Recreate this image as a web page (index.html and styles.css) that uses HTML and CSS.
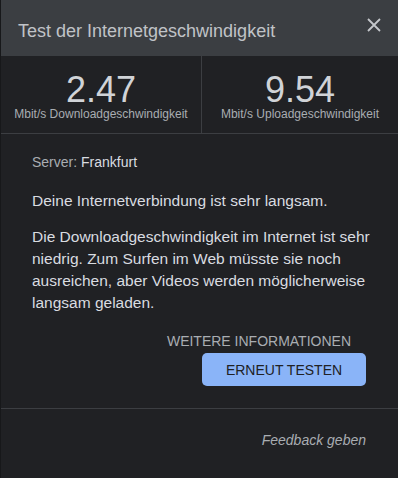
FILE: index.html
```html
<!DOCTYPE html>
<html lang="de">
<head>
<meta charset="utf-8">
<link rel="stylesheet" href="styles.css">
</head>
<body>
<div class="dialog">
  <header class="head">
    <h1 class="title">Test der Internetgeschwindigkeit</h1>
    <svg class="close" width="14" height="14" viewBox="0 0 14 14"><path d="M1 1L13 13M13 1L1 13" stroke="#c4c7cb" stroke-width="1.8" fill="none"/></svg>
  </header>
  <section class="stats">
    <div class="stat">
      <div class="num">2.47</div>
      <div class="label">Mbit/s Downloadgeschwindigkeit</div>
    </div>
    <div class="stat">
      <div class="num">9.54</div>
      <div class="label">Mbit/s Uploadgeschwindigkeit</div>
    </div>
  </section>
  <section class="info">
    <p class="server"><span class="muted">Server:</span> Frankfurt</p>
    <p class="slow">Deine Internetverbindung ist sehr langsam.</p>
    <p class="long">Die Downloadgeschwindigkeit im Internet ist sehr niedrig. Zum Surfen im Web müsste sie noch ausreichen, aber Videos werden möglicherweise langsam geladen.</p>
  </section>
  <div class="actions">
    <span class="more">WEITERE INFORMATIONEN</span>
    <button class="retest">ERNEUT TESTEN</button>
  </div>
  <footer class="foot">
    <span class="feedback">Feedback geben</span>
  </footer>
</div>
</body>
</html>
```
FILE: styles.css
```css
html, body {
  margin: 0;
  padding: 0;
  background: #202124;
}
body {
  font-family: "Liberation Sans", Arial, sans-serif;
  width: 398px;
  height: 478px;
  overflow: hidden;
}
.dialog {
  border-left: 1px solid #17181a;
  height: 478px;
  box-sizing: border-box;
  background: #202124;
}
.head {
  height: 56px;
  background: #3b3e42;
  display: flex;
  align-items: center;
  justify-content: space-between;
  padding: 0 17px 0 17px;
  box-sizing: border-box;
}
.title {
  margin: 0;
  font-size: 18px;
  font-weight: normal;
  color: #c0c3c7;
  padding-top: 6px;
}
.close {
  margin-top: -6px;
}
.stats {
  display: grid;
  grid-template-columns: 200px 1fr;
  height: 77px;
  border-bottom: 1px solid #3c3e42;
}
.stat {
  display: flex;
  flex-direction: column;
  align-items: center;
  padding-top: 16px;
}
.stat + .stat {
  border-left: 1px solid #3c3e42;
}
.num {
  font-size: 36px;
  line-height: 36px;
  color: #d0d3d7;
}
.label {
  font-size: 12px;
  line-height: 14px;
  color: #a9adb2;
  margin-top: -1px;
}
.info {
  padding: 17px 18px 0 31px;
  color: #d9dce0;
  font-size: 15.5px;
}
.info p {
  margin: 0;
  line-height: 22px;
}
.info .server {
  font-size: 14px;
}
.info .slow {
  margin-top: 17px;
}
.info .long {
  margin-top: 14px;
}
.muted { color: #a9adb2; }
.actions {
  display: flex;
  flex-direction: column;
  align-items: flex-end;
  padding: 19px 32px 0 0;
}
.more {
  font-size: 14px;
  line-height: 16px;
  color: #a9adb2;
  margin-right: 15px;
}
.retest {
  margin-top: 4px;
  width: 164px;
  height: 33px;
  border: none;
  border-radius: 5px;
  background: #8ab4f8;
  color: #202124;
  font-family: "Liberation Sans", Arial, sans-serif;
  font-size: 14px;
  padding: 0;
}
.foot {
  margin-top: 22px;
  border-top: 1px solid #3c3e42;
  display: flex;
  justify-content: flex-end;
  padding: 23px 32px 0 0;
}
.feedback {
  font-style: italic;
  font-size: 14px;
  line-height: 16px;
  color: #a9adb2;
}
```
